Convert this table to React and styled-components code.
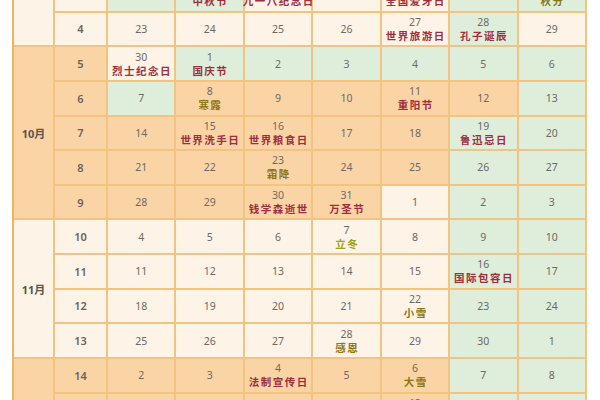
import React from "react";
import styled, { createGlobalStyle } from "styled-components";

const GlobalStyle = createGlobalStyle`
  html, body {
    margin: 0;
    padding: 0;
    background: #ffffff;
    overflow: hidden;
  }
  body {
    width: 600px;
    height: 400px;
    font-family: "Noto Sans CJK SC", "Noto Sans", sans-serif;
  }
`;

const palette = {
  cream: "#fdf3e7",
  orange: "#fbd4a6",
  green: "#dfeedb",
  line: "#f2c47f",
  edge: "#eeb45e",
};

const labelColors = {
  fest: "#9e2f3e",
  term: "#8a7716",
  leaf: "#98a021",
};

const monthTone = { 9: "cream", 10: "orange", 11: "cream", 12: "orange" };

// 2024 autumn calendar, weeks start on Monday (week 1 = Sep 2).
const blocks = [
  { month: 9, weeks: [3, 4], showLabel: false },
  { month: 10, weeks: [5, 6, 7, 8, 9], showLabel: true },
  { month: 11, weeks: [10, 11, 12, 13], showLabel: true },
  { month: 12, weeks: [14, 15], showLabel: false },
];

const labels = {
  "9-17": ["中秋节", "fest"],
  "9-18": ["九一八纪念日", "fest"],
  "9-20": ["全国爱牙日", "fest"],
  "9-22": ["秋分", "term"],
  "9-27": ["世界旅游日", "fest"],
  "9-28": ["孔子诞辰", "fest"],
  "9-30": ["烈士纪念日", "fest"],
  "10-1": ["国庆节", "fest"],
  "10-8": ["寒露", "term"],
  "10-11": ["重阳节", "fest"],
  "10-15": ["世界洗手日", "fest"],
  "10-16": ["世界粮食日", "fest"],
  "10-19": ["鲁迅忌日", "fest"],
  "10-23": ["霜降", "term"],
  "10-30": ["钱学森逝世", "fest"],
  "10-31": ["万圣节", "fest"],
  "11-7": ["立冬", "leaf"],
  "11-16": ["国际包容日", "fest"],
  "11-22": ["小雪", "term"],
  "11-28": ["感恩", "term"],
  "12-4": ["法制宣传日", "fest"],
  "12-6": ["大雪", "term"],
  "12-13": ["国家公祭日", "fest"],
};

const holidays = new Set(["9-15", "9-16", "9-17", "10-1", "10-2", "10-3", "10-4", "10-5", "10-6", "10-7"]);
const workdays = new Set(["9-14", "9-29", "10-12"]);

const weekDays = (week) => {
  const start = new Date(2024, 8, 2 + (week - 1) * 7);
  return Array.from({ length: 7 }, (_, i) => {
    const d = new Date(start);
    d.setDate(start.getDate() + i);
    const m = d.getMonth() + 1;
    const key = `${m}-${d.getDate()}`;
    const weekend = i >= 5;
    const rest = holidays.has(key) || (weekend && !workdays.has(key));
    return {
      key,
      day: d.getDate(),
      tone: rest ? "green" : monthTone[m],
      label: labels[key],
    };
  });
};

const App = () => {
  return (
    <>
      <GlobalStyle />
      <Page>
        <Table>
          {blocks.map((block) => (
            <MonthBlock key={block.month}>
              <MonthCell $tone={monthTone[block.month]}>
                {block.showLabel && `${block.month}月`}
              </MonthCell>
              <Weeks>
                {block.weeks.map((w) => (
                  <WeekRow key={w}>
                    <WeekCell $tone={monthTone[block.month]}>{w}</WeekCell>
                    {weekDays(w).map((day) => (
                      <DayCell key={day.key} $tone={day.tone}>
                        <DayNum>{day.day}</DayNum>
                        {day.label && <DayLabel $kind={day.label[1]}>{day.label[0]}</DayLabel>}
                      </DayCell>
                    ))}
                  </WeekRow>
                ))}
              </Weeks>
            </MonthBlock>
          ))}
        </Table>
      </Page>
    </>
  );
};

export default App;

const Page = styled.div`
  width: 600px;
  height: 400px;
  overflow: hidden;
  padding-left: 12px;
  box-sizing: border-box;
`;

const Table = styled.div`
  width: 575px;
  margin-top: -22px;
  display: flex;
  flex-direction: column;
  border-left: 2px solid ${palette.edge};
  box-sizing: border-box;
`;

const MonthBlock = styled.div`
  display: flex;
`;

const MonthCell = styled.div`
  width: 41px;
  flex-shrink: 0;
  display: flex;
  align-items: center;
  justify-content: center;
  background: ${(p) => palette[p.$tone]};
  border-right: 2px solid ${palette.line};
  border-bottom: 2px solid ${palette.line};
  box-sizing: border-box;
  font-family: "Noto Sans", "Noto Sans CJK SC", sans-serif;
  font-size: 11px;
  font-weight: 700;
  color: #5a5450;
`;

const Weeks = styled.div`
  flex: 1;
  display: flex;
  flex-direction: column;
`;

const WeekRow = styled.div`
  height: 34.64px;
  display: grid;
  grid-template-columns: 53px repeat(7, 1fr);
`;

const Cell = styled.div`
  display: flex;
  flex-direction: column;
  align-items: center;
  justify-content: center;
  background: ${(p) => palette[p.$tone]};
  border-right: 2px solid ${palette.line};
  border-bottom: 2px solid ${palette.line};
  box-sizing: border-box;
  min-width: 0;
`;

const WeekCell = styled(Cell)`
  font-family: "Noto Sans", sans-serif;
  font-size: 11px;
  font-weight: 600;
  color: #6a625c;
`;

const DayCell = styled(Cell)`
  gap: 1px;
`;

const DayNum = styled.span`
  font-family: "Noto Sans", sans-serif;
  font-size: 10.5px;
  line-height: 12px;
  color: #6e6964;
`;

const DayLabel = styled.span`
  font-family: "Noto Sans CJK SC", sans-serif;
  font-size: 10.5px;
  line-height: 13px;
  font-weight: 700;
  letter-spacing: 1.5px;
  margin-right: -1.5px;
  white-space: nowrap;
  color: ${(p) => labelColors[p.$kind]};
`;
